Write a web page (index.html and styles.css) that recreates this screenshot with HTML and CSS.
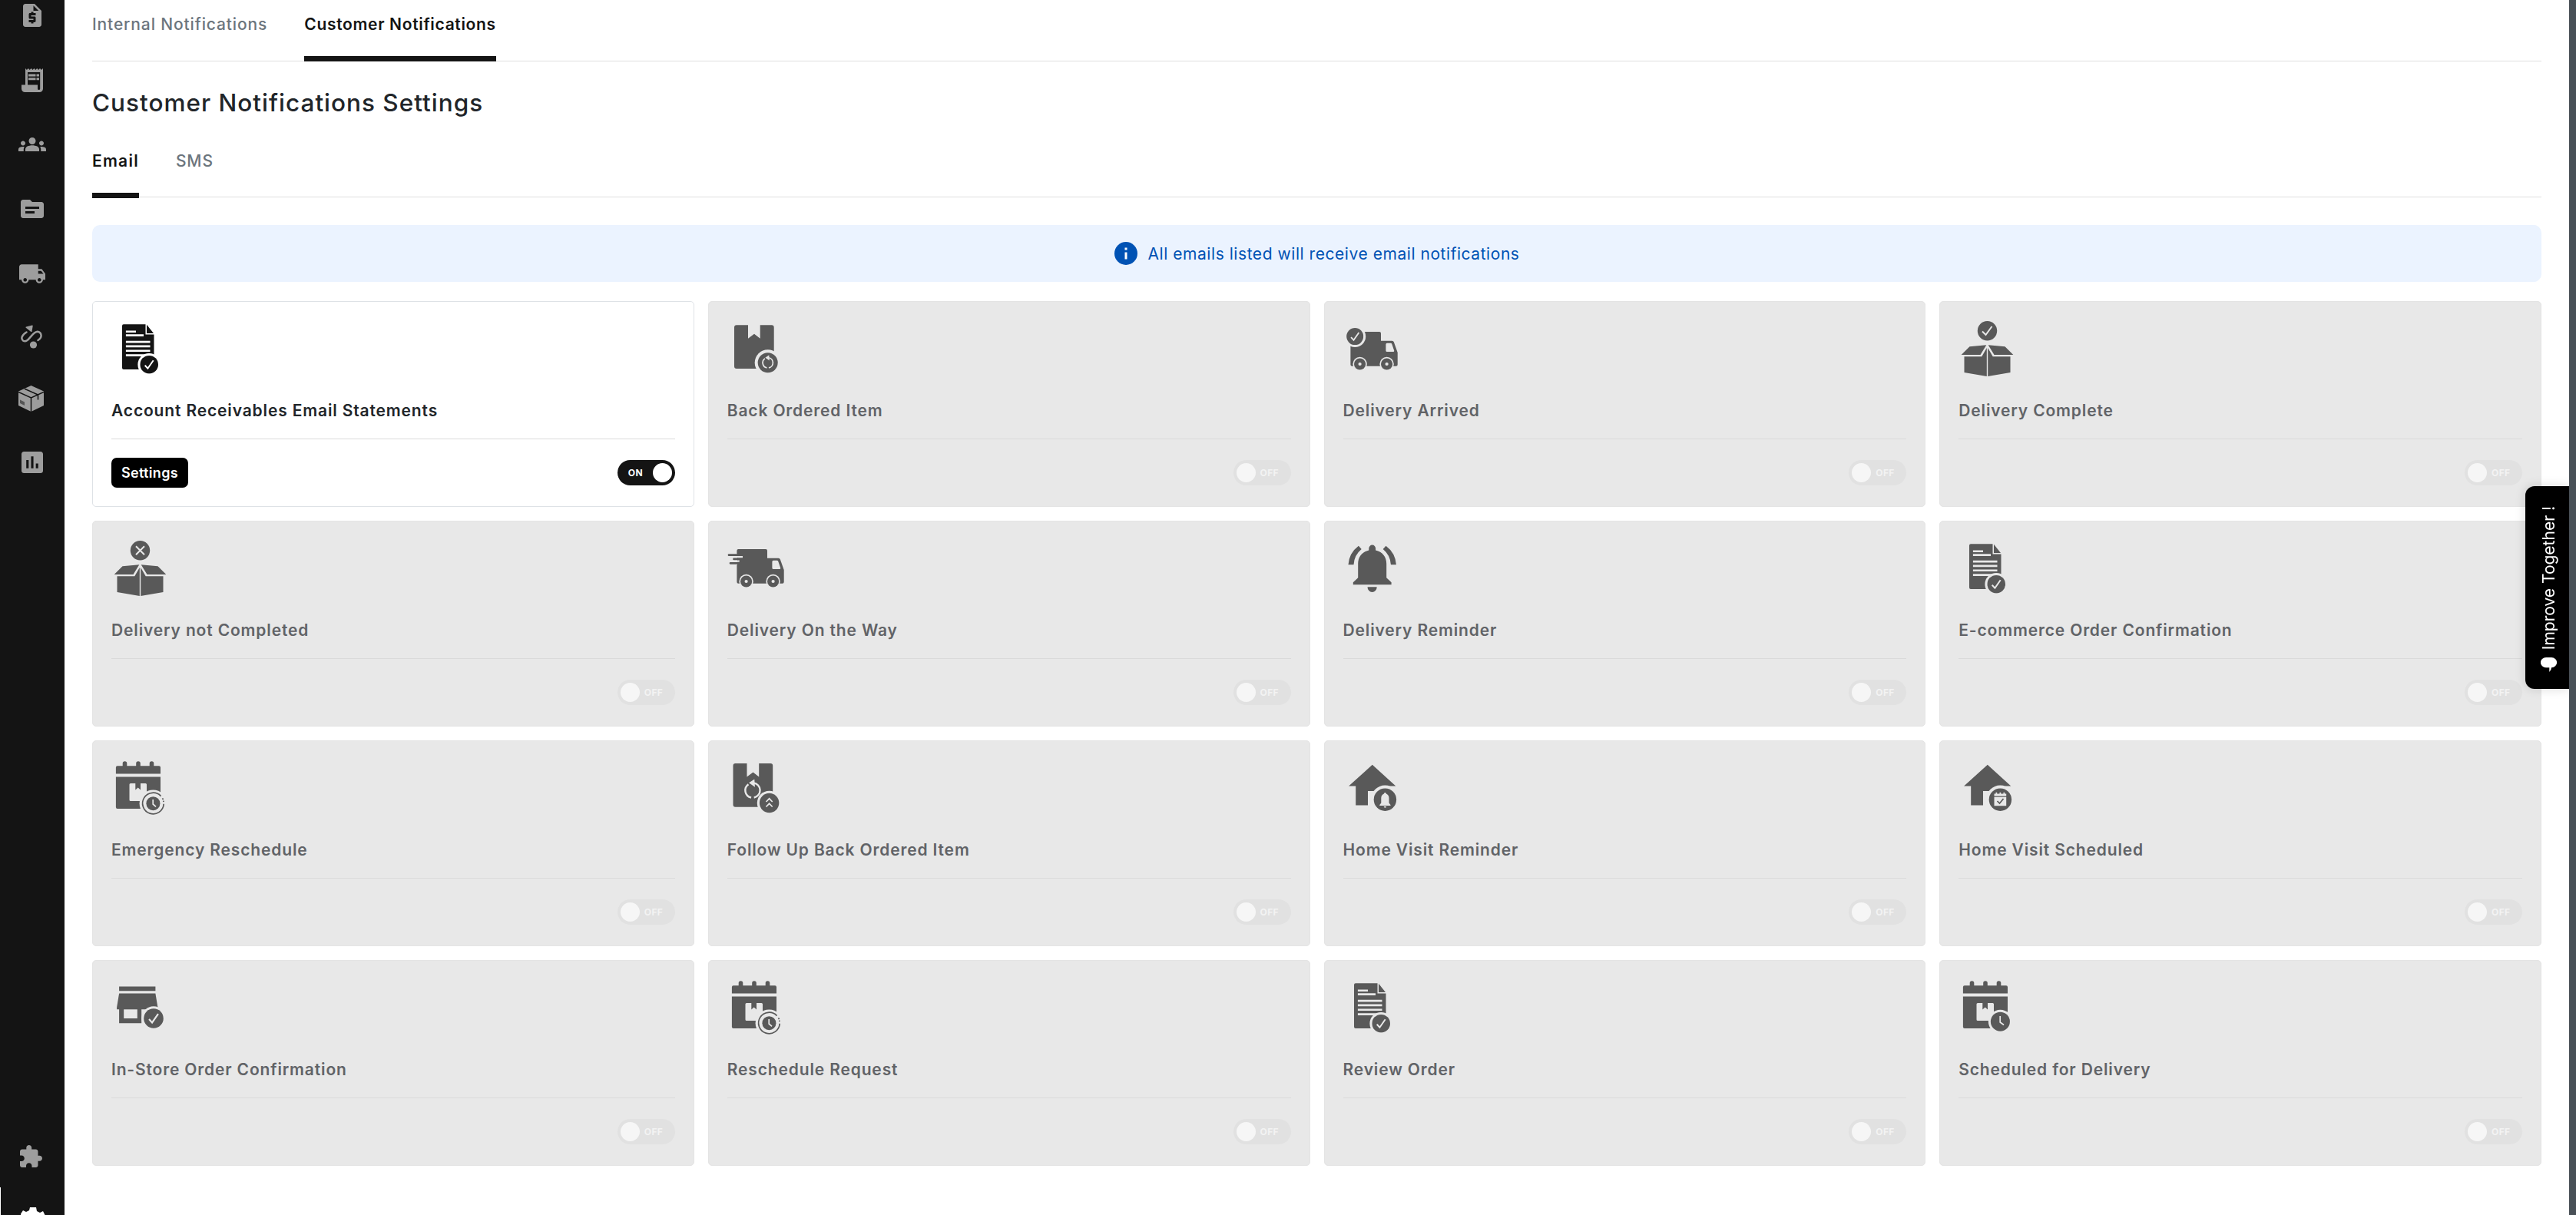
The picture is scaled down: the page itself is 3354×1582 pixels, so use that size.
FILE: index.html
```html
<!DOCTYPE html>
<html lang="en">

<head>
    <meta charset="UTF-8" />
    <meta name="viewport" content="width=device-width, initial-scale=1.0" />
    <title>Customer Notifications Settings</title>
    <link rel="stylesheet" href="styles.css">
</head>

<body>
    <!-- Shared icons -->
    <svg class="sprite" width="0" height="0">
        <symbol id="check" viewBox="-12 -12 24 24">
            <circle r="11.8" />
            <path class="line" d="M-5.5 1 L-1.8 5 L5.5 -5.5" />
        </symbol>
        <symbol id="doc" viewBox="0 0 80 80">
            <path d="M16 10.3H44.5V23.5H55.5V67a2 2 0 0 1-2 2H16a2 2 0 0 1-2-2V12.3a2 2 0 0 1 2-2z" />
            <path d="M46 10.8L55 22H46z" />
            <path class="cut" d="M18.9 18.4H32v2.7H18.9zM18.9 23.3H42V26H18.9zM18.9 31.8H50.5v2.7H18.9zM18.9 37.6H50.5v2.7H18.9zM18.9 43.4H50.5v2.7H18.9zM18.9 49.2H50.5v2.7H18.9z" />
            <circle class="cut" cx="49.2" cy="62.7" r="14.8" />
            <use href="#check" x="37.2" y="50.7" width="24" height="24" />
        </symbol>
        <symbol id="package" viewBox="0 0 80 80">
            <path d="M12 11.3H27V28.7L35 22.7L42.7 28.7V11.3H57.7a3 3 0 0 1 3 3V65a3 3 0 0 1-3 3H12a3 3 0 0 1-3-3V14.3a3 3 0 0 1 3-3z" />
        </symbol>
        <symbol id="refresh" viewBox="-12 -12 24 24">
            <path class="line" d="M-4.5 -6.5A8 8 0 0 0 -1.5 7.9M1.5 7.9A8 8 0 0 0 1 -7.9" />
            <path class="cut" d="M2 -12L-4 -8L2.5 -3.5z" />
        </symbol>
        <symbol id="truck" viewBox="0 0 80 80">
            <path d="M9.4 22a2 2 0 0 1 2-2H47a2 2 0 0 1 2 2V31.7H63.5q1.8 0 2.3 1.5L70.7 47V62.7a2 2 0 0 1-2 2H11.4a2 2 0 0 1-2-2z" />
            <path class="cut" d="M57 34.7H61.5q1.4 0 1.8 1.3L66.2 44.5q.3 1.6-1.2 1.6H57q-1.6 0-1.6-1.6V36.3q0-1.6 1.6-1.6z" />
            <circle class="cut" cx="21.6" cy="62" r="9.2" />
            <circle cx="21.6" cy="62" r="7.6" />
            <circle class="cut" cx="21.6" cy="62" r="2.1" />
            <circle class="cut" cx="56.6" cy="62" r="9.2" />
            <circle cx="56.6" cy="62" r="7.6" />
            <circle class="cut" cx="56.6" cy="62" r="2.1" />
        </symbol>
        <symbol id="box" viewBox="0 0 80 80">
            <circle cx="37.5" cy="18.7" r="12.7" />
            <path d="M14.5 39.3L36.3 37.3L28.5 50H3.7zM60.5 39.3L38.7 37.3L46.5 50H71.3z" />
            <path d="M7.5 52.3H30.3L36.8 41V78L7.5 73zM67.5 52.3H44.7L38.2 41V78L67.5 73z" />
        </symbol>
        <symbol id="calendar" viewBox="0 0 80 80">
            <path d="M14.7 13.2V10a2.8 2.8 0 0 1 5.6 0v3.2H32.2V10a2.8 2.8 0 0 1 5.6 0v3.2H49.7V10a2.8 2.8 0 0 1 5.6 0v3.2H62a2 2 0 0 1 2 2V23.5H5.9V15.2a2 2 0 0 1 2-2z" />
            <path d="M5.9 27.5H64V67a2 2 0 0 1-2 2H7.9a2 2 0 0 1-2-2z" />
            <path class="cut" d="M25 36H31.3V44.5L34.7 41.5L38 44.5V36H44.5a1.5 1.5 0 0 1 1.5 1.5V59H25a1.5 1.5 0 0 1-1.5-1.5V37.5a1.5 1.5 0 0 1 1.5-1.5z" />
        </symbol>
        <symbol id="reschedule" viewBox="0 0 80 80">
            <use href="#calendar" />
            <circle class="cut" cx="54.4" cy="62.2" r="17.8" />
            <path class="ring" d="M64.5 52.6A13.8 13.8 0 1 0 68.2 62.8M66.5 55.3l1 1.8M67.7 58.6l.3 1.6" />
            <circle cx="54.4" cy="62.2" r="9" />
            <path class="line thin" d="M54.2 57V63L58 66.3" />
        </symbol>
        <symbol id="home" viewBox="0 0 80 80">
            <path d="M37.8 11.8L68.3 39.5H60V46H32V64.6H16.2V39.5H7.1z" />
            <circle class="cut" cx="54.4" cy="57.2" r="18.6" />
            <circle cx="54.4" cy="57.2" r="14.7" />
        </symbol>
    </svg>

    <aside class="sidebar">
        <div class="nav-item">
            <svg width="24" height="30" viewBox="4 2 16 20"><path d="M14 2H6c-1.1 0-1.99.9-1.99 2L4 20c0 1.1.89 2 1.99 2H18c1.1 0 2-.9 2-2V8l-6-6zm1 10h-4v1h3c.55 0 1 .45 1 1v3c0 .55-.45 1-1 1h-1v1h-2v-1H9v-2h4v-1h-3c-.55 0-1-.45-1-1v-3c0-.55.45-1 1-1h1V9h2v1h2v2zm-2-4V3.5L17.5 8H13z" /></svg>
        </div>
        <div class="nav-item">
            <svg width="28" height="31" viewBox="0 0 28 31"><path fill-rule="evenodd" d="M5 0l1.9 2L8.8 0l1.9 2L12.6 0l1.9 2L16.4 0l1.9 2L20.2 0l1.9 2L24 0l1.9 2L28 0V26.500a4.500 4.500 0 0 1-4.500 4.500H4.500A4.500 4.500 0 0 1 0 26.500V21.500H5zM8 5V21.500H21V26.500a1.600 1.600 0 0 0 3.200 0V5z" /><path d="M9 7.500h9.500v3H9zM19.500 7.500H23v3h-3.500zM9 12.300h9.500v3H9zM19.500 12.300H23v3h-3.500z" /></svg>
        </div>
        <div class="nav-item">
            <svg width="36" height="18" viewBox="0 6 24 12"><path d="M12 12.75c1.63 0 3.07.39 4.24.9 1.08.48 1.76 1.56 1.76 2.73V18H6v-1.61c0-1.18.68-2.26 1.76-2.73 1.17-.52 2.61-.91 4.24-.91zM4 13c1.1 0 2-.9 2-2s-.9-2-2-2-2 .9-2 2 .9 2 2 2zm1.13 1.1c-.37-.06-.74-.1-1.13-.1-.99 0-1.93.21-2.78.58C.48 14.9 0 15.62 0 16.43V18h4.5v-1.61c0-.83.23-1.61.63-2.29zM20 13c1.1 0 2-.9 2-2s-.9-2-2-2-2 .9-2 2 .9 2 2 2zm4 3.43c0-.81-.48-1.53-1.22-1.85-.85-.37-1.79-.58-2.78-.58-.39 0-.76.04-1.13.1.4.68.63 1.46.63 2.29V18H24v-1.57zM12 6c1.66 0 3 1.34 3 3s-1.34 3-3 3-3-1.34-3-3 1.34-3 3-3z" /></svg>
        </div>
        <div class="nav-item">
            <svg width="30" height="24" viewBox="2 4 20 16"><path d="M20 6h-8l-2-2H4c-1.1 0-1.99.9-1.99 2L2 18c0 1.1.9 2 2 2h16c1.1 0 2-.9 2-2V8c0-1.1-.9-2-2-2zm-6 10H6v-2h8v2zm4-4H6v-2h12v2z" /></svg>
        </div>
        <div class="nav-item">
            <svg width="34" height="25" viewBox="1 4 22 16"><path d="M20 8h-3V4H3c-1.1 0-2 .9-2 2v11h2c0 1.66 1.34 3 3 3s3-1.34 3-3h6c0 1.66 1.34 3 3 3s3-1.34 3-3h2v-5l-3-4zM6 18.5c-.83 0-1.5-.67-1.5-1.5s.67-1.5 1.5-1.5 1.5.67 1.5 1.5-.67 1.5-1.5 1.5zm13.5-9l1.96 2.5H17V9.5h2.5zm-1.5 9c-.83 0-1.5-.67-1.5-1.5s.67-1.5 1.5-1.5 1.5.67 1.5 1.5-.67 1.5-1.5 1.5z" /></svg>
        </div>
        <div class="nav-item route">
            <svg width="28" height="31" viewBox="0 0 28 31"><path d="M7.500 9.500C1 13.500 0 18 3 20.500C10 25 14.500 8.500 22 8.800C27.500 10 28.500 16.500 22.500 20" fill="none" stroke="#9d9d9d" stroke-width="2.500" stroke-linecap="round" /><path d="M7.200 3.200L15 1.200L13.800 8.300z" stroke="#9d9d9d" stroke-width="1.500" stroke-linejoin="round" /><circle cx="16.500" cy="26" r="4.600" /></svg>
        </div>
        <div class="nav-item short">
            <svg width="33" height="34" viewBox="0 0 33 34"><path d="M16.500 0L33 7.500V26L16.500 34L0 26V7.500z" /><path d="M0 8.500L16.500 16L33 8.500M16.500 16V34M8 4.200L25.500 12V18.500" fill="none" stroke="#141414" stroke-width="1.500" /><path d="M2 18.500L8 21.500V26L2 23z" fill="#555" /></svg>
        </div>
        <div class="nav-item tall">
            <svg width="28" height="28" viewBox="3 3 18 18"><path d="M19 3H5c-1.100 0-2 .9-2 2v14c0 1.100.9 2 2 2h14c1.100 0 2-.9 2-2V5c0-1.100-.9-2-2-2zM9 17H7v-7h2v7zm4 0h-2V7h2v10zm4 0h-2v-4h2v4z" /></svg>
        </div>
        <div class="nav-bottom">
            <div class="nav-item">
                <svg width="29" height="29" viewBox="2 1 21 21"><path d="M20.5 11H19V7c0-1.100-.9-2-2-2h-4V3.500C13 2.120 11.880 1 10.500 1S8 2.120 8 3.500V5H4c-1.100 0-1.990.9-1.990 2v3.800H3.500c1.490 0 2.700 1.210 2.700 2.700s-1.210 2.700-2.700 2.700H2V20c0 1.100.9 2 2 2h3.800v-1.500c0-1.490 1.210-2.700 2.700-2.700 1.490 0 2.700 1.210 2.700 2.700V22H17c1.100 0 2-.9 2-2v-4h1.500c1.380 0 2.500-1.120 2.500-2.500S21.880 11 20.500 11z" /></svg>
            </div>
            <div class="nav-item active">
                <svg width="32" height="30" viewBox="0 0 32 30"><path d="M12 0h8l1 5 4 2 4-2 3 6-3 3v4l3 3-4 6-5-2-3 1-1 4h-7l-1-4-4-2-4 2-4-6 4-3v-4l-4-3 4-6 4 2 4-2z" /></svg>
            </div>
        </div>
    </aside>

    <main class="content">
        <nav class="tabs">
            <a class="tab">Internal Notifications</a>
            <a class="tab active">Customer Notifications</a>
        </nav>

        <h1>Customer Notifications Settings</h1>

        <nav class="tabs sub-tabs">
            <a class="tab active">Email</a>
            <a class="tab">SMS</a>
        </nav>

        <div class="banner">
            <svg width="30" height="30" viewBox="0 0 30 30"><circle cx="15" cy="15" r="15" /><path d="M13.500 7.500h3v3h-3zM13.500 13.500h3v9h-3z" fill="#fff" /></svg>
            <span>All emails listed will receive email notifications</span>
        </div>

        <div class="grid">
            <div class="card on">
                <svg class="icon"><use href="#doc" /></svg>
                <h2>Account Receivables Email Statements</h2>
                <div class="card-footer">
                    <button class="settings">Settings</button>
                    <div class="toggle"><span>ON</span><i></i></div>
                </div>
            </div>
            <div class="card">
                <svg class="icon" viewBox="0 0 80 80">
                    <use href="#package" />
                    <circle class="cut" cx="52.700" cy="60.300" r="17" />
                    <circle cx="52.700" cy="60.300" r="13" />
                    <use href="#refresh" x="42.700" y="50.300" width="20" height="20" />
                </svg>
                <h2>Back Ordered Item</h2>
                <div class="card-footer"><div class="toggle"><i></i><span>OFF</span></div></div>
            </div>
            <div class="card">
                <svg class="icon" viewBox="0 0 80 80">
                    <use href="#truck" />
                    <circle class="cut" cx="15.200" cy="26.100" r="14" />
                    <use href="#check" x="4" y="14.900" width="22.400" height="22.400" />
                </svg>
                <h2>Delivery Arrived</h2>
                <div class="card-footer"><div class="toggle"><i></i><span>OFF</span></div></div>
            </div>
            <div class="card">
                <svg class="icon" viewBox="0 0 80 80">
                    <use href="#box" />
                    <path class="line" d="M31 19.500L35.500 24L43.500 13" />
                </svg>
                <h2>Delivery Complete</h2>
                <div class="card-footer"><div class="toggle"><i></i><span>OFF</span></div></div>
            </div>
            <div class="card">
                <svg class="icon" viewBox="0 0 80 80">
                    <use href="#box" />
                    <path class="line" d="M32 13.200L43 24.200M43 13.200L32 24.200" />
                </svg>
                <h2>Delivery not Completed</h2>
                <div class="card-footer"><div class="toggle"><i></i><span>OFF</span></div></div>
            </div>
            <div class="card">
                <svg class="icon" viewBox="0 0 80 80">
                    <use href="#truck" x="3" y="-3" width="80" height="80" />
                    <path class="cut" d="M10 26h10v2.300H10zM10 31.500h5.700v2.300H10zM10 23.500h3v14h-3z" />
                    <path d="M2 23.300H14V26H2a1.350 1.350 0 0 1 0-2.700zM8.500 28.600H14v2.700H8.500a1.350 1.350 0 0 1 0-2.700zM4 34H14v2.700H4a1.350 1.350 0 0 1 0-2.700z" />
                </svg>
                <h2>Delivery On the Way</h2>
                <div class="card-footer"><div class="toggle"><i></i><span>OFF</span></div></div>
            </div>
            <div class="card">
                <svg class="icon" viewBox="0 0 80 80">
                    <path d="M33.300 18.500V16a4.400 4.400 0 0 1 8.800 0V18.500C51 20.500 56.200 27 56.200 36V54.300L62.600 60.300V63.300H12.800V60.300L19.200 54.300V36C19.200 27 24.500 20.500 33.300 18.500z" />
                    <path d="M31.500 66.300H43.700A6.100 6.700 0 0 1 31.500 66.300zM19.900 12.700L23.700 17Q14 25 13.500 37.300H6.500Q7.500 22 19.900 12.700zM55.500 12.700L51.700 17Q61.400 25 61.900 37.300H68.900Q67.900 22 55.500 12.700z" />
                </svg>
                <h2>Delivery Reminder</h2>
                <div class="card-footer"><div class="toggle"><i></i><span>OFF</span></div></div>
            </div>
            <div class="card">
                <svg class="icon"><use href="#doc" /></svg>
                <h2>E-commerce Order Confirmation</h2>
                <div class="card-footer"><div class="toggle"><i></i><span>OFF</span></div></div>
            </div>
            <div class="card">
                <svg class="icon"><use href="#reschedule" /></svg>
                <h2>Emergency Reschedule</h2>
                <div class="card-footer"><div class="toggle"><i></i><span>OFF</span></div></div>
            </div>
            <div class="card">
                <svg class="icon" viewBox="0 0 80 80">
                    <use href="#package" x="-1.500" y="-1.200" width="80" height="80" />
                    <use href="#refresh" x="18.400" y="30.500" width="29" height="29" />
                    <circle class="cut" cx="54.600" cy="61.500" r="15.800" />
                    <circle cx="54.600" cy="61.500" r="12.700" />
                    <path class="line thin" d="M50.500 60L54.600 55.800L58.700 60M50.500 66.500L54.600 62.300L58.700 66.500" />
                </svg>
                <h2>Follow Up Back Ordered Item</h2>
                <div class="card-footer"><div class="toggle"><i></i><span>OFF</span></div></div>
            </div>
            <div class="card">
                <svg class="icon" viewBox="0 0 80 80">
                    <use href="#home" />
                    <path class="cut" d="M54.400 48q1.500 0 1.500 1.500Q59.500 51 59.500 55V61.500L61.500 64V65H47.300V64L49.300 61.500V55Q49.300 51 52.900 49.500Q52.900 48 54.400 48zM52.700 66H56.100a1.700 1.700 0 0 1-3.400 0z" />
                </svg>
                <h2>Home Visit Reminder</h2>
                <div class="card-footer"><div class="toggle"><i></i><span>OFF</span></div></div>
            </div>
            <div class="card">
                <svg class="icon" viewBox="0 0 80 80">
                    <use href="#home" />
                    <path class="cut" d="M46.500 49.500h2v-1.700h1.700v1.700h3.300v-1.700h1.700v1.700h3.300v-1.700h1.700v1.700h2v3h-15.700zM46.500 53.700h15.700v11.500H46.500z" />
                    <path class="mark" d="M50.500 59L53.500 62L58.500 56" />
                </svg>
                <h2>Home Visit Scheduled</h2>
                <div class="card-footer"><div class="toggle"><i></i><span>OFF</span></div></div>
            </div>
            <div class="card">
                <svg class="icon" viewBox="0 0 80 80">
                    <path d="M10.100 14.600H57.400V20.300H10.100zM10.100 23.600H57.400L60.400 41.500V44.300H39.200V62.300H10.100V44.300H7.100V41.500z" />
                    <path class="cut" d="M16.200 44.300H33.800V56H16.200z" />
                    <circle class="cut" cx="55" cy="56" r="15.700" />
                    <use href="#check" x="42" y="43" width="26" height="26" />
                </svg>
                <h2>In-Store Order Confirmation</h2>
                <div class="card-footer"><div class="toggle"><i></i><span>OFF</span></div></div>
            </div>
            <div class="card">
                <svg class="icon"><use href="#reschedule" /></svg>
                <h2>Reschedule Request</h2>
                <div class="card-footer"><div class="toggle"><i></i><span>OFF</span></div></div>
            </div>
            <div class="card">
                <svg class="icon"><use href="#doc" /></svg>
                <h2>Review Order</h2>
                <div class="card-footer"><div class="toggle"><i></i><span>OFF</span></div></div>
            </div>
            <div class="card">
                <svg class="icon" viewBox="0 0 80 80">
                    <use href="#calendar" />
                    <circle class="cut" cx="54.400" cy="60.200" r="15.500" />
                    <circle cx="54.400" cy="60.200" r="12.500" />
                    <path class="line thin" d="M54.200 53V61L59 64.500" />
                </svg>
                <h2>Scheduled for Delivery</h2>
                <div class="card-footer"><div class="toggle"><i></i><span>OFF</span></div></div>
            </div>
        </div>
    </main>

    <div class="feedback">
        <span>Improve Together !</span>
        <svg width="21" height="19" viewBox="0 0 21 19"><path d="M7 0H14a7 6.500 0 0 1 0 13.200Q14 16 11.300 19V13.200H7A7 6.500 0 0 1 7 0z" /></svg>
    </div>
    <div class="scrollbar"></div>
</body>

</html>
```

FILE: styles.css
```css
* {
    box-sizing: border-box;
}

body {
    margin: 0;
    height: 100vh;
    display: flex;
    overflow: hidden;
    background: #fff;
    color: #212529;
    font-family: Inter, "Open Sans", sans-serif;
}

.sprite {
    position: absolute;
}

/* Sidebar */
.sidebar {
    width: 84px;
    height: 1582px;
    flex-shrink: 0;
    background: #141414;
    display: flex;
    flex-direction: column;
    overflow: hidden;
}

.nav-item {
    height: 84px;
    flex-shrink: 0;
    display: flex;
    align-items: center;
    justify-content: center;
    fill: #9d9d9d;
}

.nav-item:first-child {
    margin-top: -22px;
}

.nav-item.route {
    height: 81px;
    padding-right: 3px;
}

.nav-item.short {
    height: 80px;
    padding-right: 3px;
}

.nav-item.tall {
    height: 86px;
}

.nav-bottom {
    height: 111px;
    margin-top: auto;
}

.nav-bottom .nav-item {
    height: 82px;
}

.nav-bottom .nav-item:first-child {
    margin-top: -7px;
    padding-right: 3px;
}

.nav-bottom .nav-item.active {
    border-left: 1px solid #fff;
    fill: #fff;
}

/* Main content */
.content {
    width: 3225px;
    padding: 0 0 0 36px;
}

.tabs {
    display: flex;
    gap: 48px;
    height: 80px;
    border-bottom: 1px solid #dfdfdf;
}

.tab {
    height: 80px;
    padding-top: 19px;
    font-size: 21px;
    line-height: 25px;
    font-weight: 500;
    letter-spacing: 0.87px;
    color: #6c757d;
}

.tab.active {
    color: #141414;
    font-weight: 600;
    letter-spacing: 0.67px;
    border-bottom: 7px solid #141414;
}

h1 {
    margin: 33px 0 0;
    font-size: 31.5px;
    line-height: 42px;
    font-weight: 500;
    letter-spacing: 1px;
}

.sub-tabs {
    height: 102px;
}

.sub-tabs .tab {
    height: 103px;
    padding-top: 42px;
}

.sub-tabs .tab.active {
    letter-spacing: 1.25px;
}

.banner {
    margin-top: 36px;
    height: 74px;
    border-radius: 10px;
    background: #ebf3ff;
    color: #0052b4;
    fill: #0052b4;
    display: flex;
    align-items: center;
    justify-content: center;
    gap: 14px;
    font-size: 21px;
    letter-spacing: 0.55px;
}

/* Notification cards */
.grid {
    margin-top: 25px;
    display: grid;
    grid-template-columns: repeat(4, 1fr);
    grid-auto-rows: 268px;
    gap: 18px;
}

.card {
    --bg: #e8e8e8;
    padding: 19px 24px 0;
    border: 1px solid #e4e4e4;
    border-radius: 5px;
    background: var(--bg);
    color: #616367;
    fill: #595959;
}

.card.on {
    --bg: #fff;
    border-color: #dee2e6;
    color: #212529;
    fill: #141414;
}

.icon {
    display: block;
    width: 80px;
    height: 80px;
    overflow: visible;
}

.cut {
    fill: var(--bg);
}

.line {
    fill: none;
    stroke: var(--bg);
    stroke-width: 2;
}

.line.thin {
    stroke-width: 1.7;
}

.ring,
.mark {
    fill: none;
    stroke: #595959;
    stroke-width: 1.7;
}

.card h2 {
    margin: 0;
    padding: 30px 0 23px;
    height: 79px;
    font-size: 21px;
    line-height: 26px;
    font-weight: 600;
    letter-spacing: 0.85px;
    white-space: nowrap;
}

.card-footer {
    height: 88px;
    border-top: 1px solid #dadada;
    display: flex;
    align-items: center;
}

.settings {
    width: 100px;
    height: 39px;
    padding: 0 0 1px;
    border: 0;
    border-radius: 7px;
    background: #000;
    color: #fff;
    font: 600 18px Inter, sans-serif;
    letter-spacing: 0.35px;
}

.toggle {
    width: 75px;
    height: 33px;
    margin-left: auto;
    padding: 0 4px;
    border-radius: 17px;
    background: #e1e1e1;
    color: #f3f3f3;
    display: flex;
    align-items: center;
    font-size: 12px;
    font-weight: 700;
}

.toggle i {
    width: 25px;
    height: 25px;
    border-radius: 50%;
    background: #f6f6f6;
}

.toggle span {
    margin-left: 6px;
    letter-spacing: 0.4px;
}

.on .toggle {
    background: #141414;
    color: #fff;
    justify-content: space-between;
}

.on .toggle span {
    margin-left: 10px;
}

.on .toggle i {
    background: #fff;
}

/* Feedback tab */
.feedback {
    position: fixed;
    right: 9px;
    top: 633px;
    width: 57px;
    height: 264px;
    border-radius: 12px 0 0 12px;
    background: #000;
    color: #fff;
    fill: #fff;
    box-shadow: 0 0 14px rgba(0, 0, 0, 0.15);
    display: flex;
    flex-direction: column;
    align-items: center;
    justify-content: flex-end;
    gap: 10px;
    padding: 0 0 22px 4px;
    font-size: 21px;
}

.feedback span {
    writing-mode: vertical-rl;
    transform: rotate(180deg);
    white-space: nowrap;
}

.scrollbar {
    position: fixed;
    right: 0;
    top: 0;
    width: 9px;
    height: 100vh;
    background: #495057;
}
```
